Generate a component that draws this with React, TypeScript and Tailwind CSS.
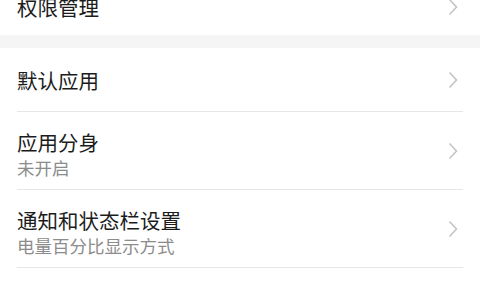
const FONT = '[font-family:"Noto_Sans_CJK_SC","Noto_Sans",sans-serif]'

type Row = { title: string; sub?: string }

const ROWS: Row[] = [
  { title: '默认应用' },
  { title: '应用分身', sub: '未开启' },
  { title: '通知和状态栏设置', sub: '电量百分比显示方式' },
]

function Arrow() {
  return (
    <svg width="10" height="18" viewBox="0 0 10 18" className="mr-[5px] shrink-0" aria-hidden>
      <path d="M1.5 1.5 L8.5 9 L1.5 16.5" fill="none" stroke="#c4c4c4" strokeWidth="1.6" />
    </svg>
  )
}

function SettingRow({ row }: { row: Row }) {
  return (
    <div className="px-[17px]">
      <div
        className={`relative flex justify-between border-b border-[#e6e6e6] ${
          row.sub ? 'h-[78px] items-start pt-[17px]' : 'h-[64px] items-center'
        }`}
      >
        <div className="flex min-w-0 flex-col">
          <span className="text-[20.5px] leading-[26px] text-[#1c1c1c]">{row.title}</span>
          {row.sub && (
            <span className="mt-[1px] text-[17.5px] leading-[24px] text-[#8c8c8c]">{row.sub}</span>
          )}
        </div>
        <div className={row.sub ? 'self-center -mt-[17px]' : ''}>
          <Arrow />
        </div>
      </div>
    </div>
  )
}

export default function App() {
  return (
    <div className={`h-[300px] w-[480px] overflow-hidden bg-white ${FONT}`}>
      <div className="-mt-[21px] flex h-[56px] items-center justify-between px-[17px]">
        <span className="text-[20.5px] leading-[26px] text-[#1c1c1c]">权限管理</span>
        <Arrow />
      </div>
      <div className="h-[13px] bg-[#f5f5f5]" />
      {ROWS.map((r) => (
        <SettingRow key={r.title} row={r} />
      ))}
    </div>
  )
}
